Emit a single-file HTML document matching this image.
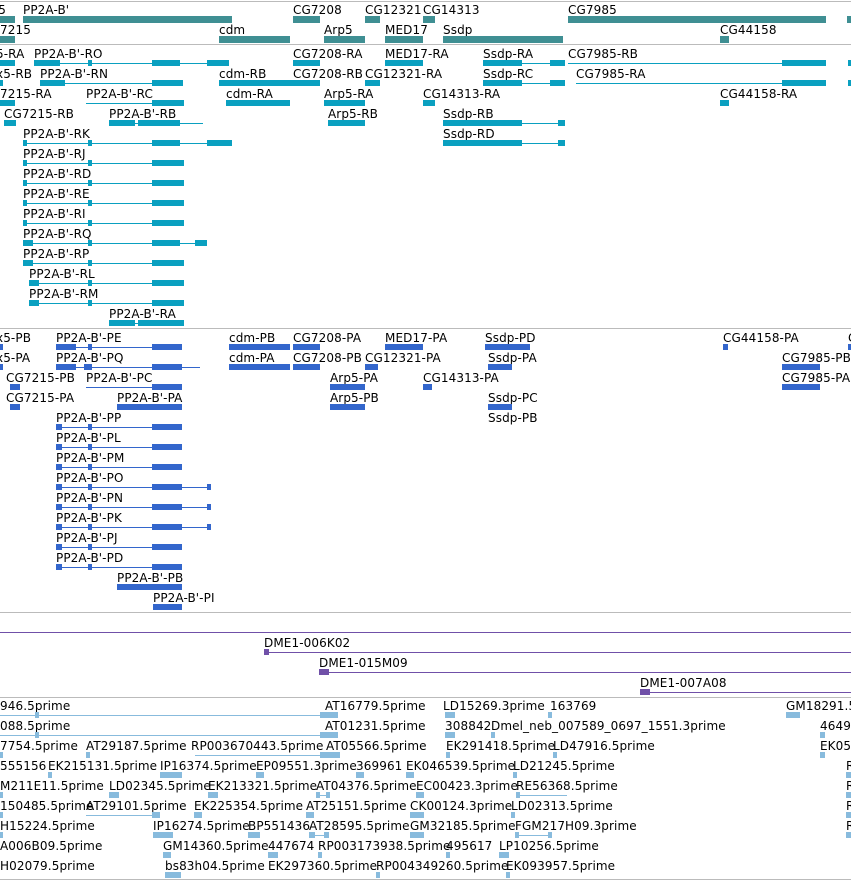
<!DOCTYPE html>
<html><head><meta charset="utf-8"><style>
body{margin:0;width:851px;height:881px;overflow:hidden;background:#fff;position:relative}
div{position:absolute}
.l{font:12px/14px "DejaVu Sans",sans-serif;color:#000;white-space:nowrap;margin-top:2px;letter-spacing:0.1px}
.s{height:1px;background:#bbb;left:0;width:851px}
.t{background:#3f8f93;height:7px}
.c{background:#0aa0c0}.p{background:#3366cc}.v{background:#7050a8}.q{background:#88bbdd}
.h{height:1px}.b{height:6px}
</style></head><body>
<div class="s" style="top:1px"></div>
<div class="s" style="top:44px"></div>
<div class="s" style="top:328px"></div>
<div class="s" style="top:612px"></div>
<div class="s" style="top:697px"></div>
<div class="s" style="top:879px"></div>

<!-- Track 1 -->
<div class="l" style="left:-9px;top:1px">x5</div>
<div class="l" style="left:23px;top:1px">PP2A-B'</div>
<div class="l" style="left:293px;top:1px">CG7208</div>
<div class="l" style="left:365px;top:1px">CG12321</div>
<div class="l" style="left:423px;top:1px">CG14313</div>
<div class="l" style="left:568px;top:1px">CG7985</div>
<div class="t" style="left:0;top:16px;width:15px"></div>
<div class="t" style="left:23px;top:16px;width:209px"></div>
<div class="t" style="left:293px;top:16px;width:27px"></div>
<div class="t" style="left:365px;top:16px;width:15px"></div>
<div class="t" style="left:423px;top:16px;width:12px"></div>
<div class="t" style="left:568px;top:16px;width:258px"></div>
<div class="t" style="left:847px;top:16px;width:4px"></div>
<div class="l" style="left:0;top:21px">7215</div>
<div class="l" style="left:219px;top:21px">cdm</div>
<div class="l" style="left:324px;top:21px">Arp5</div>
<div class="l" style="left:385px;top:21px">MED17</div>
<div class="l" style="left:443px;top:21px">Ssdp</div>
<div class="l" style="left:720px;top:21px">CG44158</div>
<div class="t" style="left:0;top:36px;width:15px"></div>
<div class="t" style="left:219px;top:36px;width:71px"></div>
<div class="t" style="left:324px;top:36px;width:41px"></div>
<div class="t" style="left:385px;top:36px;width:38px"></div>
<div class="t" style="left:443px;top:36px;width:120px"></div>
<div class="t" style="left:720px;top:36px;width:9px"></div>

<!-- Track 2 -->
<div class="l" style="left:-4px;top:45px">5-RA</div><div class="l" style="left:34px;top:45px">PP2A-B'-RO</div><div class="l" style="left:293px;top:45px">CG7208-RA</div><div class="l" style="left:385px;top:45px">MED17-RA</div><div class="l" style="left:483px;top:45px">Ssdp-RA</div><div class="l" style="left:568px;top:45px">CG7985-RB</div>
<div class="c b" style="left:0;top:60px;width:15px"></div><div class="c h" style="left:34px;top:63px;width:193px"></div><div class="c b" style="left:34px;top:60px;width:26px"></div><div class="c b" style="left:88px;top:60px;width:4px"></div><div class="c b" style="left:152px;top:60px;width:28px"></div><div class="c b" style="left:207px;top:60px;width:22px"></div><div class="c b" style="left:293px;top:60px;width:27px"></div><div class="c b" style="left:385px;top:60px;width:38px"></div><div class="c b" style="left:483px;top:60px;width:39px"></div><div class="c h" style="left:522px;top:63px;width:43px"></div><div class="c b" style="left:550px;top:60px;width:15px"></div><div class="c h" style="left:568px;top:63px;width:258px"></div><div class="c b" style="left:782px;top:60px;width:44px"></div><div class="c b" style="left:848px;top:60px;width:3px"></div>

<div class="l" style="left:-4px;top:65px">x5-RB</div><div class="l" style="left:40px;top:65px">PP2A-B'-RN</div><div class="l" style="left:219px;top:65px">cdm-RB</div><div class="l" style="left:293px;top:65px">CG7208-RB</div><div class="l" style="left:365px;top:65px">CG12321-RA</div><div class="l" style="left:483px;top:65px">Ssdp-RC</div><div class="l" style="left:576px;top:65px">CG7985-RA</div>
<div class="c b" style="left:0;top:80px;width:3px"></div><div class="c h" style="left:40px;top:83px;width:143px"></div><div class="c b" style="left:40px;top:80px;width:25px"></div><div class="c b" style="left:152px;top:80px;width:31px"></div><div class="c b" style="left:219px;top:80px;width:71px"></div><div class="c b" style="left:285px;top:80px;width:35px"></div><div class="c b" style="left:365px;top:80px;width:15px"></div><div class="c b" style="left:483px;top:80px;width:39px"></div><div class="c h" style="left:522px;top:83px;width:43px"></div><div class="c b" style="left:550px;top:80px;width:15px"></div><div class="c h" style="left:576px;top:83px;width:250px"></div><div class="c b" style="left:782px;top:80px;width:44px"></div><div class="c b" style="left:848px;top:80px;width:3px"></div>

<div class="l" style="left:0;top:85px">7215-RA</div><div class="l" style="left:86px;top:85px">PP2A-B'-RC</div><div class="l" style="left:226px;top:85px">cdm-RA</div><div class="l" style="left:324px;top:85px">Arp5-RA</div><div class="l" style="left:423px;top:85px">CG14313-RA</div><div class="l" style="left:720px;top:85px">CG44158-RA</div>
<div class="c b" style="left:0;top:100px;width:15px"></div><div class="c h" style="left:86px;top:103px;width:98px"></div><div class="c b" style="left:152px;top:100px;width:32px"></div><div class="c b" style="left:226px;top:100px;width:64px"></div><div class="c b" style="left:324px;top:100px;width:41px"></div><div class="c b" style="left:423px;top:100px;width:12px"></div><div class="c b" style="left:720px;top:100px;width:9px"></div>

<div class="l" style="left:4px;top:105px">CG7215-RB</div><div class="l" style="left:109px;top:105px">PP2A-B'-RB</div><div class="l" style="left:328px;top:105px">Arp5-RB</div><div class="l" style="left:443px;top:105px">Ssdp-RB</div>
<div class="c b" style="left:4px;top:120px;width:12px"></div><div class="c h" style="left:109px;top:123px;width:94px"></div><div class="c b" style="left:109px;top:120px;width:26px"></div><div class="c b" style="left:138px;top:120px;width:42px"></div><div class="c b" style="left:328px;top:120px;width:37px"></div><div class="c b" style="left:443px;top:120px;width:79px"></div><div class="c h" style="left:522px;top:123px;width:43px"></div><div class="c b" style="left:558px;top:120px;width:7px"></div>

<div class="l" style="left:23px;top:125px">PP2A-B'-RK</div><div class="l" style="left:443px;top:125px">Ssdp-RD</div>
<div class="c h" style="left:23px;top:143px;width:209px"></div><div class="c b" style="left:23px;top:140px;width:4px"></div><div class="c b" style="left:88px;top:140px;width:4px"></div><div class="c b" style="left:152px;top:140px;width:28px"></div><div class="c b" style="left:207px;top:140px;width:25px"></div><div class="c b" style="left:443px;top:140px;width:79px"></div><div class="c h" style="left:522px;top:143px;width:43px"></div><div class="c b" style="left:558px;top:140px;width:7px"></div>

<div class="l" style="left:23px;top:145px">PP2A-B'-RJ</div><div class="c h" style="left:23px;top:163px;width:161px"></div><div class="c b" style="left:23px;top:160px;width:4px"></div><div class="c b" style="left:88px;top:160px;width:4px"></div><div class="c b" style="left:152px;top:160px;width:32px"></div>
<div class="l" style="left:23px;top:165px">PP2A-B'-RD</div><div class="c h" style="left:23px;top:183px;width:161px"></div><div class="c b" style="left:23px;top:180px;width:4px"></div><div class="c b" style="left:88px;top:180px;width:4px"></div><div class="c b" style="left:152px;top:180px;width:32px"></div>
<div class="l" style="left:23px;top:185px">PP2A-B'-RE</div><div class="c h" style="left:23px;top:203px;width:161px"></div><div class="c b" style="left:23px;top:200px;width:4px"></div><div class="c b" style="left:88px;top:200px;width:4px"></div><div class="c b" style="left:152px;top:200px;width:32px"></div>
<div class="l" style="left:23px;top:205px">PP2A-B'-RI</div><div class="c h" style="left:23px;top:223px;width:161px"></div><div class="c b" style="left:23px;top:220px;width:4px"></div><div class="c b" style="left:88px;top:220px;width:4px"></div><div class="c b" style="left:152px;top:220px;width:32px"></div>
<div class="l" style="left:23px;top:225px">PP2A-B'-RQ</div><div class="c h" style="left:23px;top:243px;width:184px"></div><div class="c b" style="left:23px;top:240px;width:10px"></div><div class="c b" style="left:88px;top:240px;width:4px"></div><div class="c b" style="left:152px;top:240px;width:28px"></div><div class="c b" style="left:195px;top:240px;width:12px"></div>
<div class="l" style="left:23px;top:245px">PP2A-B'-RP</div><div class="c h" style="left:23px;top:263px;width:161px"></div><div class="c b" style="left:23px;top:260px;width:10px"></div><div class="c b" style="left:88px;top:260px;width:4px"></div><div class="c b" style="left:152px;top:260px;width:32px"></div>
<div class="l" style="left:29px;top:265px">PP2A-B'-RL</div><div class="c h" style="left:29px;top:283px;width:155px"></div><div class="c b" style="left:29px;top:280px;width:10px"></div><div class="c b" style="left:88px;top:280px;width:4px"></div><div class="c b" style="left:152px;top:280px;width:32px"></div>
<div class="l" style="left:29px;top:285px">PP2A-B'-RM</div><div class="c h" style="left:29px;top:303px;width:155px"></div><div class="c b" style="left:29px;top:300px;width:10px"></div><div class="c b" style="left:88px;top:300px;width:4px"></div><div class="c b" style="left:152px;top:300px;width:32px"></div>
<div class="l" style="left:109px;top:305px">PP2A-B'-RA</div><div class="c h" style="left:109px;top:323px;width:75px"></div><div class="c b" style="left:109px;top:320px;width:26px"></div><div class="c b" style="left:138px;top:320px;width:46px"></div>

<!-- Track 3 -->
<div class="l" style="left:-4px;top:329px">x5-PB</div><div class="l" style="left:56px;top:329px">PP2A-B'-PE</div><div class="l" style="left:229px;top:329px">cdm-PB</div><div class="l" style="left:293px;top:329px">CG7208-PA</div><div class="l" style="left:385px;top:329px">MED17-PA</div><div class="l" style="left:485px;top:329px">Ssdp-PD</div><div class="l" style="left:723px;top:329px">CG44158-PA</div><div class="l" style="left:848px;top:329px">C</div>
<div class="p b" style="left:0;top:344px;width:3px"></div><div class="p h" style="left:56px;top:347px;width:126px"></div><div class="p b" style="left:56px;top:344px;width:20px"></div><div class="p b" style="left:88px;top:344px;width:4px"></div><div class="p b" style="left:152px;top:344px;width:30px"></div><div class="p b" style="left:229px;top:344px;width:61px"></div><div class="p b" style="left:293px;top:344px;width:27px"></div><div class="p b" style="left:385px;top:344px;width:38px"></div><div class="p b" style="left:485px;top:344px;width:45px"></div><div class="p b" style="left:723px;top:344px;width:5px"></div><div class="p b" style="left:848px;top:344px;width:3px"></div>

<div class="l" style="left:-4px;top:349px">x5-PA</div><div class="l" style="left:56px;top:349px">PP2A-B'-PQ</div><div class="l" style="left:229px;top:349px">cdm-PA</div><div class="l" style="left:293px;top:349px">CG7208-PB</div><div class="l" style="left:365px;top:349px">CG12321-PA</div><div class="l" style="left:488px;top:349px">Ssdp-PA</div><div class="l" style="left:782px;top:349px">CG7985-PB</div>
<div class="p b" style="left:0;top:364px;width:3px"></div><div class="p h" style="left:56px;top:367px;width:144px"></div><div class="p b" style="left:56px;top:364px;width:20px"></div><div class="p b" style="left:84px;top:364px;width:8px"></div><div class="p b" style="left:152px;top:364px;width:30px"></div><div class="p b" style="left:229px;top:364px;width:61px"></div><div class="p b" style="left:293px;top:364px;width:27px"></div><div class="p b" style="left:365px;top:364px;width:13px"></div><div class="p b" style="left:488px;top:364px;width:24px"></div><div class="p b" style="left:782px;top:364px;width:38px"></div>

<div class="l" style="left:6px;top:369px">CG7215-PB</div><div class="l" style="left:86px;top:369px">PP2A-B'-PC</div><div class="l" style="left:330px;top:369px">Arp5-PA</div><div class="l" style="left:423px;top:369px">CG14313-PA</div><div class="l" style="left:782px;top:369px">CG7985-PA</div>
<div class="p b" style="left:10px;top:384px;width:10px"></div><div class="p h" style="left:86px;top:387px;width:96px"></div><div class="p b" style="left:152px;top:384px;width:30px"></div><div class="p b" style="left:330px;top:384px;width:35px"></div><div class="p b" style="left:423px;top:384px;width:9px"></div><div class="p b" style="left:782px;top:384px;width:38px"></div>

<div class="l" style="left:6px;top:389px">CG7215-PA</div><div class="l" style="left:117px;top:389px">PP2A-B'-PA</div><div class="l" style="left:330px;top:389px">Arp5-PB</div><div class="l" style="left:488px;top:389px">Ssdp-PC</div>
<div class="p b" style="left:10px;top:404px;width:10px"></div><div class="p b" style="left:117px;top:404px;width:65px"></div><div class="p b" style="left:330px;top:404px;width:35px"></div><div class="p b" style="left:488px;top:404px;width:24px"></div>

<div class="l" style="left:56px;top:409px">PP2A-B'-PP</div><div class="l" style="left:488px;top:409px">Ssdp-PB</div>
<div class="p h" style="left:56px;top:427px;width:126px"></div><div class="p b" style="left:56px;top:424px;width:6px"></div><div class="p b" style="left:88px;top:424px;width:4px"></div><div class="p b" style="left:152px;top:424px;width:30px"></div>
<div class="l" style="left:56px;top:429px">PP2A-B'-PL</div><div class="p h" style="left:56px;top:447px;width:126px"></div><div class="p b" style="left:56px;top:444px;width:6px"></div><div class="p b" style="left:88px;top:444px;width:4px"></div><div class="p b" style="left:152px;top:444px;width:30px"></div>
<div class="l" style="left:56px;top:449px">PP2A-B'-PM</div><div class="p h" style="left:56px;top:467px;width:126px"></div><div class="p b" style="left:56px;top:464px;width:6px"></div><div class="p b" style="left:88px;top:464px;width:4px"></div><div class="p b" style="left:152px;top:464px;width:30px"></div>
<div class="l" style="left:56px;top:469px">PP2A-B'-PO</div><div class="p h" style="left:56px;top:487px;width:155px"></div><div class="p b" style="left:56px;top:484px;width:6px"></div><div class="p b" style="left:88px;top:484px;width:4px"></div><div class="p b" style="left:152px;top:484px;width:30px"></div><div class="p b" style="left:207px;top:484px;width:4px"></div>
<div class="l" style="left:56px;top:489px">PP2A-B'-PN</div><div class="p h" style="left:56px;top:507px;width:155px"></div><div class="p b" style="left:56px;top:504px;width:6px"></div><div class="p b" style="left:88px;top:504px;width:4px"></div><div class="p b" style="left:152px;top:504px;width:30px"></div><div class="p b" style="left:207px;top:504px;width:4px"></div>
<div class="l" style="left:56px;top:509px">PP2A-B'-PK</div><div class="p h" style="left:56px;top:527px;width:155px"></div><div class="p b" style="left:56px;top:524px;width:6px"></div><div class="p b" style="left:88px;top:524px;width:4px"></div><div class="p b" style="left:152px;top:524px;width:30px"></div><div class="p b" style="left:207px;top:524px;width:4px"></div>
<div class="l" style="left:56px;top:529px">PP2A-B'-PJ</div><div class="p h" style="left:56px;top:547px;width:126px"></div><div class="p b" style="left:56px;top:544px;width:6px"></div><div class="p b" style="left:88px;top:544px;width:4px"></div><div class="p b" style="left:152px;top:544px;width:30px"></div>
<div class="l" style="left:56px;top:549px">PP2A-B'-PD</div><div class="p h" style="left:56px;top:567px;width:126px"></div><div class="p b" style="left:56px;top:564px;width:6px"></div><div class="p b" style="left:88px;top:564px;width:4px"></div><div class="p b" style="left:152px;top:564px;width:30px"></div>
<div class="l" style="left:117px;top:569px">PP2A-B'-PB</div><div class="p b" style="left:117px;top:584px;width:65px"></div>
<div class="l" style="left:153px;top:589px">PP2A-B'-PI</div><div class="p b" style="left:153px;top:604px;width:29px"></div>

<!-- purple -->
<div class="v h" style="left:0;top:632px;width:851px"></div>
<div class="l" style="left:264px;top:634px">DME1-006K02</div>
<div class="v h" style="left:264px;top:652px;width:587px"></div><div class="v b" style="left:264px;top:649px;width:5px"></div>
<div class="l" style="left:319px;top:654px">DME1-015M09</div>
<div class="v h" style="left:319px;top:672px;width:532px"></div><div class="v b" style="left:319px;top:669px;width:10px"></div>
<div class="l" style="left:640px;top:674px">DME1-007A08</div>
<div class="v h" style="left:640px;top:692px;width:211px"></div><div class="v b" style="left:640px;top:689px;width:10px"></div>

<!-- light blue -->
<div class="l" style="left:0;top:697px">946.5prime</div><div class="l" style="left:325px;top:697px">AT16779.5prime</div><div class="l" style="left:443px;top:697px">LD15269.3prime</div><div class="l" style="left:550px;top:697px">163769</div><div class="l" style="left:786px;top:697px">GM18291.5prime</div>
<div class="q h" style="left:0;top:715px;width:338px"></div><div class="q b" style="left:35px;top:712px;width:4px"></div><div class="q b" style="left:320px;top:712px;width:18px"></div><div class="q b" style="left:445px;top:712px;width:10px"></div><div class="q b" style="left:548px;top:712px;width:4px"></div><div class="q b" style="left:786px;top:712px;width:14px"></div>
<div class="l" style="left:0;top:717px">088.5prime</div><div class="l" style="left:325px;top:717px">AT01231.5prime</div><div class="l" style="left:445px;top:717px">308842</div><div class="l" style="left:491px;top:717px">Dmel_neb_007589_0697_1551.3prime</div><div class="l" style="left:820px;top:717px">4649</div>
<div class="q h" style="left:0;top:735px;width:338px"></div><div class="q b" style="left:35px;top:732px;width:4px"></div><div class="q b" style="left:320px;top:732px;width:18px"></div><div class="q b" style="left:445px;top:732px;width:10px"></div><div class="q b" style="left:491px;top:732px;width:4px"></div><div class="q b" style="left:820px;top:732px;width:5px"></div>
<div class="l" style="left:0;top:737px">7754.5prime</div><div class="l" style="left:86px;top:737px">AT29187.5prime</div><div class="l" style="left:191px;top:737px">RP003670443.5prime</div><div class="l" style="left:326px;top:737px">AT05566.5prime</div><div class="l" style="left:446px;top:737px">EK291418.5prime</div><div class="l" style="left:553px;top:737px">LD47916.5prime</div><div class="l" style="left:820px;top:737px">EK05</div>
<div class="q b" style="left:0;top:752px;width:3px"></div><div class="q b" style="left:86px;top:752px;width:4px"></div><div class="q h" style="left:195px;top:755px;width:145px"></div><div class="q b" style="left:320px;top:752px;width:20px"></div><div class="q b" style="left:446px;top:752px;width:4px"></div><div class="q b" style="left:553px;top:752px;width:4px"></div><div class="q b" style="left:820px;top:752px;width:5px"></div>
<div class="l" style="left:0;top:757px">555156</div><div class="l" style="left:48px;top:757px">EK215131.5prime</div><div class="l" style="left:160px;top:757px">IP16374.5prime</div><div class="l" style="left:256px;top:757px">EP09551.3prime</div><div class="l" style="left:356px;top:757px">369961</div><div class="l" style="left:406px;top:757px">EK046539.5prime</div><div class="l" style="left:513px;top:757px">LD21245.5prime</div><div class="l" style="left:846px;top:757px">R</div>
<div class="q b" style="left:48px;top:772px;width:4px"></div><div class="q b" style="left:160px;top:772px;width:22px"></div><div class="q b" style="left:256px;top:772px;width:8px"></div><div class="q b" style="left:356px;top:772px;width:8px"></div><div class="q b" style="left:406px;top:772px;width:8px"></div><div class="q b" style="left:513px;top:772px;width:4px"></div><div class="q b" style="left:846px;top:772px;width:5px"></div>
<div class="l" style="left:0;top:777px">M211E11.5prime</div><div class="l" style="left:109px;top:777px">LD02345.5prime</div><div class="l" style="left:208px;top:777px">EK213321.5prime</div><div class="l" style="left:316px;top:777px">AT04376.5prime</div><div class="l" style="left:416px;top:777px">EC00423.3prime</div><div class="l" style="left:516px;top:777px">RE56368.5prime</div><div class="l" style="left:846px;top:777px">R</div>
<div class="q b" style="left:0;top:792px;width:3px"></div><div class="q b" style="left:109px;top:792px;width:10px"></div><div class="q b" style="left:208px;top:792px;width:10px"></div><div class="q h" style="left:316px;top:795px;width:14px"></div><div class="q b" style="left:316px;top:792px;width:4px"></div><div class="q b" style="left:326px;top:792px;width:4px"></div><div class="q b" style="left:416px;top:792px;width:8px"></div><div class="q h" style="left:516px;top:795px;width:51px"></div><div class="q b" style="left:516px;top:792px;width:4px"></div><div class="q b" style="left:846px;top:792px;width:5px"></div>
<div class="l" style="left:0;top:797px">150485.5prime</div><div class="l" style="left:86px;top:797px">AT29101.5prime</div><div class="l" style="left:194px;top:797px">EK225354.5prime</div><div class="l" style="left:306px;top:797px">AT25151.5prime</div><div class="l" style="left:410px;top:797px">CK00124.3prime</div><div class="l" style="left:511px;top:797px">LD02313.5prime</div><div class="l" style="left:846px;top:797px">R</div>
<div class="q b" style="left:0;top:812px;width:3px"></div><div class="q h" style="left:86px;top:815px;width:74px"></div><div class="q b" style="left:152px;top:812px;width:8px"></div><div class="q b" style="left:194px;top:812px;width:8px"></div><div class="q b" style="left:306px;top:812px;width:8px"></div><div class="q b" style="left:410px;top:812px;width:14px"></div><div class="q b" style="left:511px;top:812px;width:4px"></div><div class="q b" style="left:846px;top:812px;width:5px"></div>
<div class="l" style="left:0;top:817px">H15224.5prime</div><div class="l" style="left:153px;top:817px">IP16274.5prime</div><div class="l" style="left:248px;top:817px">BP551436</div><div class="l" style="left:309px;top:817px">AT28595.5prime</div><div class="l" style="left:410px;top:817px">GM32185.5prime</div><div class="l" style="left:515px;top:817px">FGM217H09.3prime</div><div class="l" style="left:846px;top:817px">R</div>
<div class="q b" style="left:0;top:832px;width:3px"></div><div class="q b" style="left:153px;top:832px;width:20px"></div><div class="q b" style="left:248px;top:832px;width:12px"></div><div class="q h" style="left:309px;top:835px;width:20px"></div><div class="q b" style="left:309px;top:832px;width:6px"></div><div class="q b" style="left:324px;top:832px;width:5px"></div><div class="q b" style="left:410px;top:832px;width:14px"></div><div class="q h" style="left:515px;top:835px;width:37px"></div><div class="q b" style="left:515px;top:832px;width:4px"></div><div class="q b" style="left:548px;top:832px;width:4px"></div><div class="q b" style="left:846px;top:832px;width:5px"></div>
<div class="l" style="left:0;top:837px">A006B09.5prime</div><div class="l" style="left:163px;top:837px">GM14360.5prime</div><div class="l" style="left:268px;top:837px">447674</div><div class="l" style="left:318px;top:837px">RP003173938.5prime</div><div class="l" style="left:446px;top:837px">495617</div><div class="l" style="left:499px;top:837px">LP10256.5prime</div>
<div class="q b" style="left:163px;top:852px;width:8px"></div><div class="q b" style="left:268px;top:852px;width:10px"></div><div class="q b" style="left:318px;top:852px;width:4px"></div><div class="q b" style="left:446px;top:852px;width:4px"></div><div class="q b" style="left:499px;top:852px;width:10px"></div>
<div class="l" style="left:0;top:857px">H02079.5prime</div><div class="l" style="left:165px;top:857px">bs83h04.5prime</div><div class="l" style="left:268px;top:857px">EK297360.5prime</div><div class="l" style="left:376px;top:857px">RP004349260.5prime</div><div class="l" style="left:506px;top:857px">EK093957.5prime</div>
<div class="q b" style="left:165px;top:872px;width:16px"></div><div class="q b" style="left:376px;top:872px;width:4px"></div><div class="q b" style="left:506px;top:872px;width:4px"></div>
</body></html>
